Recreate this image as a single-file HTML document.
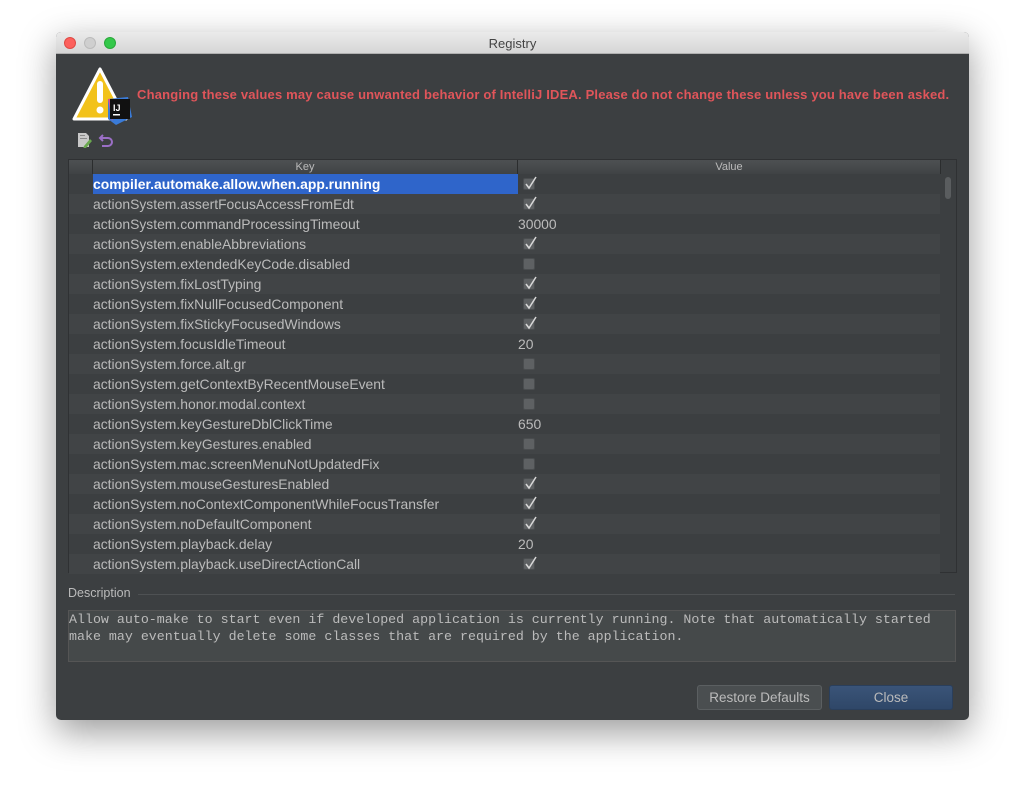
<!DOCTYPE html>
<html><head><meta charset="utf-8"><style>
*{margin:0;padding:0;box-sizing:border-box}
body{width:1025px;height:801px;background:#fff;font-family:"Liberation Sans",sans-serif;position:relative;overflow:hidden}
.win{position:absolute;left:56px;top:32px;width:913px;height:688px;background:#3c3f41;border-radius:5px;overflow:hidden;box-shadow:0 12px 36px rgba(0,0,0,.4)}
.tb{position:absolute;left:0;top:0;width:913px;height:22px;background:linear-gradient(#ebebeb,#d6d6d6);border-bottom:1px solid #b0b0b0;text-align:center;font-size:13px;line-height:23px;color:#444}
.dot{position:absolute;top:5px;width:12px;height:12px;border-radius:50%}
.abs{position:absolute}
.warn{position:absolute;left:81px;top:55px;font-size:13px;font-weight:bold;color:#e0555a;white-space:nowrap;letter-spacing:0.18px}
.tbl{position:absolute;left:12px;top:127px;width:889px;height:414px;background:#3c3f41;border:1px solid #2f3133}
.hd{position:absolute;top:0;height:14px;background:linear-gradient(#4d5052,#404345);border-right:1px solid #2b2d2e;font-size:11px;color:#bbb;text-align:center;line-height:14px}
.row{position:absolute;left:0;width:871px;height:20px;font-size:13.9px;color:#bbbbbb;line-height:20px}
.row.alt{background:#414446}
.k{position:absolute;left:24px;white-space:nowrap}
.v{position:absolute;left:449px}
.cb{position:absolute;left:454px;top:4px;width:12px;height:12px;background:#5e6163;border:1px solid #4a4d4f;border-radius:2px}
.cb svg{position:absolute;left:0;top:-3px}
.btn{position:absolute;top:653px;height:25px;border-radius:3px;font-size:13.5px;color:#bbb;text-align:center;line-height:24px}
</style></head><body>
<div class="win">
 <div class="tb">Registry
  <div class="dot" style="left:8px;background:#fc605c;border:1px solid #de4a44"></div>
  <div class="dot" style="left:28px;background:#cfcfcf;border:1px solid #bbb"></div>
  <div class="dot" style="left:48px;background:#34c84a;border:1px solid #2aa83a"></div>
 </div>
 <svg class="abs" style="left:14px;top:35px" width="64" height="60" viewBox="0 0 64 60">
  <path d="M30 2 L56 52 H4 Z" fill="#f2c21b" stroke="#fff" stroke-width="3" stroke-linejoin="round"/>
  <rect x="27" y="14" width="6" height="22" rx="3" fill="#fff"/><circle cx="30" cy="43" r="3.5" fill="#fff"/>
  <path d="M38 32 L58 30 L62 50 L46 58 L38 52 Z" fill="#3a7bd8"/>
  <path d="M38 32 L50 32 L42 54 Z" fill="#e04b8c"/>
  <rect x="40" y="32" width="20" height="20" fill="#111"/>
  <text x="43" y="44" font-family="Liberation Sans" font-weight="bold" font-size="9" fill="#fff">IJ</text>
  <rect x="43" y="47" width="7" height="1.5" fill="#fff"/>
 </svg>
 <div class="warn">Changing these values may cause unwanted behavior of IntelliJ IDEA. Please do not change these unless you have been asked.</div>
 <svg class="abs" style="left:20px;top:100px" width="16" height="16" viewBox="0 0 16 16"><path d="M2 1h8l3 3v11H2z" fill="#c8c8c8"/><path d="M4 3h5v1H4zM4 6h7v1H4z" fill="#888"/><path d="M8 14 l6-7 2 2-6 7-3 1z" fill="#6aa84f"/></svg>
 <svg class="abs" style="left:42px;top:100px" width="16" height="16" viewBox="0 0 16 16"><path d="M5 3 L2 6 L5 9 M2 6 H10 A4 4 0 0 1 10 14 H4" fill="none" stroke="#9b6fc6" stroke-width="2"/></svg>
 <div class="tbl">
  <div class="hd" style="left:0;width:24px"></div>
  <div class="hd" style="left:24px;width:425px">Key</div>
  <div class="hd" style="left:449px;width:423px">Value</div>
  <div class="abs" style="left:876px;top:17px;width:6px;height:22px;border-radius:3px;background:#5a5d5f"></div>
  <div id="rows"></div>
 </div>
 <div class="abs" style="left:12px;top:554px;font-size:12.5px;color:#bbb">Description</div>
 <div class="abs" style="left:82px;top:562px;width:817px;height:1px;background:#4e5153"></div>
 <div class="abs" style="left:12px;top:578px;width:888px;height:52px;background:#45494a;border:1px solid #555;font-family:'Liberation Mono',monospace;font-size:13.3px;color:#bbb;line-height:17px;padding:0 0 0 0;white-space:pre">Allow auto-make to start even if developed application is currently running. Note that automatically started
make may eventually delete some classes that are required by the application.</div>
 <div class="btn" style="left:641px;width:125px;background:#4a4e50;border:1px solid #5b5f61">Restore Defaults</div>
 <div class="btn" style="left:773px;width:124px;background:linear-gradient(#3a5478,#2f4768);border:1px solid #2a3f5c">Close</div>
</div>
<script>
var d=[["compiler.automake.allow.when.app.running",1],["actionSystem.assertFocusAccessFromEdt",1],["actionSystem.commandProcessingTimeout","30000"],["actionSystem.enableAbbreviations",1],["actionSystem.extendedKeyCode.disabled",0],["actionSystem.fixLostTyping",1],["actionSystem.fixNullFocusedComponent",1],["actionSystem.fixStickyFocusedWindows",1],["actionSystem.focusIdleTimeout","20"],["actionSystem.force.alt.gr",0],["actionSystem.getContextByRecentMouseEvent",0],["actionSystem.honor.modal.context",0],["actionSystem.keyGestureDblClickTime","650"],["actionSystem.keyGestures.enabled",0],["actionSystem.mac.screenMenuNotUpdatedFix",0],["actionSystem.mouseGesturesEnabled",1],["actionSystem.noContextComponentWhileFocusTransfer",1],["actionSystem.noDefaultComponent",1],["actionSystem.playback.delay","20"],["actionSystem.playback.useDirectActionCall",1]];
var h="",ck='<svg width="13" height="14" viewBox="0 0 13 14"><path d="M2 8 L5 12 L12 1" fill="none" stroke="#d8d8d8" stroke-width="1.5"/></svg>';
d.forEach(function(r,i){var t=14+i*20;var k=i==0?'<span class="k" style="background:#2f65ca;color:#fff;font-weight:bold;left:24px;width:425px">'+r[0]+'</span>':'<span class="k">'+r[0]+'</span>';
var v=typeof r[1]=="string"?'<span class="v">'+r[1]+'</span>':'<div class="cb">'+(r[1]?ck:'')+'</div>';
h+='<div class="row'+(i%2?' alt':'')+'" style="top:'+t+'px">'+k+v+'</div>';});
document.getElementById("rows").innerHTML=h;
</script>
</body></html>
